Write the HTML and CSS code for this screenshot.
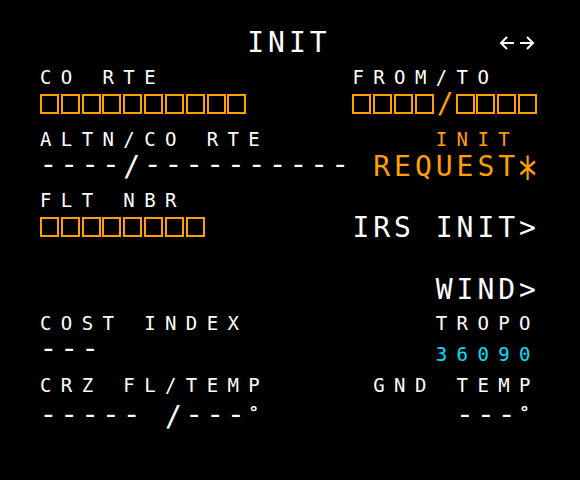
FILE: index.html
```html
<!DOCTYPE html>
<html>
<head>
<meta charset="utf-8">
<link rel="stylesheet" href="styles.css">
</head>
<body>
<div class="screen">
  <div class="row data title">
    <span class="lg s11 ttl">INIT</span>
    <svg class="arrows s23" width="36" height="14" viewBox="0 0 36 14">
      <path d="M8 1 L2 7 L8 13 M2 7 H15 M28 1 L34 7 L28 13 M34 7 H21" fill="none" stroke="#fff" stroke-width="2"/>
    </svg>
  </div>

  <div class="row label">
    <span class="sm s1">CO RTE</span>
    <span class="sm s16">FROM/TO</span>
  </div>
  <div class="row data">
    <div class="boxes s1">
      <span class="box"></span><span class="box"></span><span class="box"></span><span class="box"></span><span class="box"></span><span class="box"></span><span class="box"></span><span class="box"></span><span class="box"></span><span class="box"></span>
    </div>
    <div class="boxes s16">
      <span class="box"></span><span class="box"></span><span class="box"></span><span class="box"></span><span class="bslash">/</span><span class="box"></span><span class="box"></span><span class="box"></span><span class="box"></span>
    </div>
  </div>

  <div class="row label">
    <span class="sm s1">ALTN/CO RTE</span>
    <span class="sm s20 orange">INIT</span>
  </div>
  <div class="row data">
    <span class="lg s1"><span class="dash">----</span>/<span class="dash">----------</span></span>
    <span class="lg s17 orange">REQUEST<span class="star">*</span></span>
  </div>

  <div class="row label">
    <span class="sm s1">FLT NBR</span>
  </div>
  <div class="row data">
    <div class="boxes s1">
      <span class="box"></span><span class="box"></span><span class="box"></span><span class="box"></span><span class="box"></span><span class="box"></span><span class="box"></span><span class="box"></span>
    </div>
    <span class="lg s16">IRS INIT&gt;</span>
  </div>

  <div class="row label"></div>
  <div class="row data">
    <span class="lg s20">WIND&gt;</span>
  </div>

  <div class="row label">
    <span class="sm s1">COST INDEX</span>
    <span class="sm s20">TROPO</span>
  </div>
  <div class="row data">
    <span class="lg s1"><span class="dash">---</span></span>
    <span class="sm smdata s20 cyan">36090</span>
  </div>

  <div class="row label">
    <span class="sm s1">CRZ FL/TEMP</span>
    <span class="sm s17">GND TEMP</span>
  </div>
  <div class="row data">
    <span class="lg s1"><span class="dash">-----</span> /<span class="dash">---</span><span class="deg">°</span></span>
    <span class="lg s21"><span class="dash">---</span><span class="deg">°</span></span>
  </div>
</div>
</body>
</html>
```

FILE: styles.css
```css
html, body {
  margin: 0;
  padding: 0;
  background: #000;
}

body {
  width: 580px;
  height: 480px;
  overflow: hidden;
  color: #fff;
  font-family: "DejaVu Sans Mono", monospace;
}

.screen {
  margin-left: 40px;
  width: 500px;
  padding-top: 25px;
}

.row {
  display: grid;
  grid-template-columns: repeat(24, 20.8333px);
  white-space: pre;
}

.row > * {
  grid-row: 1;
}

.label {
  height: 20px;
  line-height: 20px;
}

.data {
  height: 36px;
  line-height: 36px;
  margin-bottom: 5.5px;
}

.title {
  margin-bottom: 6px;
}

.s1 { grid-column-start: 1; }
.s11 { grid-column-start: 11; }
.s16 { grid-column-start: 16; }
.s17 { grid-column-start: 17; }
.s20 { grid-column-start: 20; }
.s21 { grid-column-start: 21; }
.s23 { grid-column-start: 23; }

.sm {
  font-size: 19px;
  letter-spacing: calc(20.8333px - 11.439px);
}

.smdata {
  line-height: 43px;
}

.lg {
  font-size: 28px;
  letter-spacing: calc(20.8333px - 16.857px);
}

.ttl {
  margin-left: -1px;
}

.orange { color: #ff9f00; }
.cyan { color: #00e1ff; }

.arrows {
  align-self: center;
  margin-left: 1px;
}

.dash {
  font-family: "Liberation Mono", monospace;
  letter-spacing: calc(20.8333px - 16.803px);
  position: relative;
  top: -3px;
}

.deg {
  font-size: 18px;
  font-weight: bold;
  letter-spacing: 0;
  vertical-align: 7px;
}

.star {
  display: inline-block;
  letter-spacing: 0;
  transform-origin: 50% 11px;
  transform: translateY(5px) scale(1.25, 1.9);
}

.boxes {
  display: flex;
  align-self: start;
  margin-top: 7px;
  height: 20px;
}

.box {
  flex: none;
  box-sizing: border-box;
  width: 19px;
  height: 20px;
  margin-right: 1.8333px;
  border: 2px solid #ff9f00;
}

.bslash {
  flex: none;
  width: 20.8333px;
  margin-left: -1px;
  font-size: 28px;
  line-height: 20px;
  text-align: center;
  color: #ff9f00;
}
```
